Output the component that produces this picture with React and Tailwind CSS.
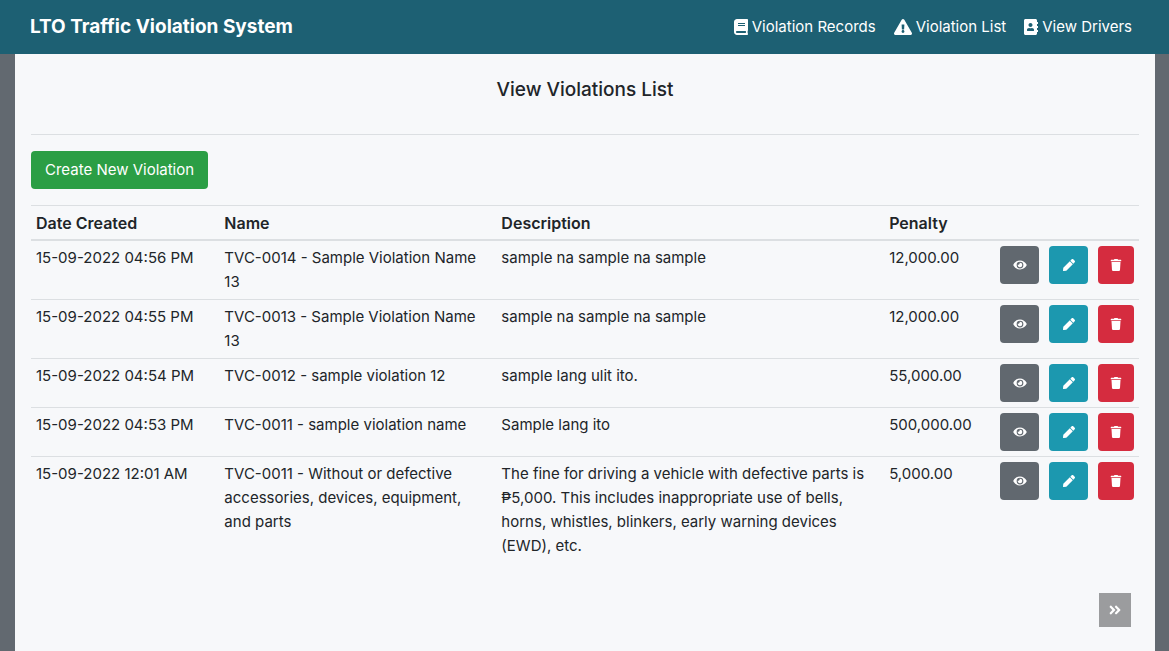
import { FaBook, FaExclamationTriangle, FaAddressBook, FaEye, FaPen, FaTrash, FaAngleDoubleRight } from "react-icons/fa";

const links = [
  { label: "Violation Records", Icon: FaBook, size: "h-4 w-3.5" },
  { label: "Violation List", Icon: FaExclamationTriangle, size: "h-4 w-[18px]" },
  { label: "View Drivers", Icon: FaAddressBook, size: "h-4 w-3.5" },
];

const rows = [
  { date: "15-09-2022 04:56 PM", name: "TVC-0014 - Sample Violation Name 13", description: "sample na sample na sample", penalty: "12,000.00" },
  { date: "15-09-2022 04:55 PM", name: "TVC-0013 - Sample Violation Name 13", description: "sample na sample na sample", penalty: "12,000.00" },
  { date: "15-09-2022 04:54 PM", name: "TVC-0012 - sample violation 12", description: "sample lang ulit ito.", penalty: "55,000.00" },
  { date: "15-09-2022 04:53 PM", name: "TVC-0011 - sample violation name", description: "Sample lang ito", penalty: "500,000.00" },
  {
    date: "15-09-2022 12:01 AM",
    name: "TVC-0011 - Without or defective accessories, devices, equipment, and parts",
    description:
      "The fine for driving a vehicle with defective parts is ₱5,000. This includes inappropriate use of bells, horns, whistles, blinkers, early warning devices (EWD), etc.",
    penalty: "5,000.00",
  },
];

const actions = [
  { label: "View", Icon: FaEye, size: "h-3 w-3.5", color: "bg-[#61686f]" },
  { label: "Edit", Icon: FaPen, size: "h-3 w-3", color: "bg-[#1c98af]" },
  { label: "Delete", Icon: FaTrash, size: "h-3 w-3", color: "bg-[#d52c3f]" },
];

export default function App() {
  return (
    <div className="flex min-h-screen flex-col bg-[#626970] font-['Inter','Liberation_Sans',sans-serif] text-[15px] leading-6 text-[#212529]">
      <header className="flex h-[54px] items-center justify-between bg-[#1d6073] pr-[37px] pl-[30px] text-white">
        <a href="#home" className="text-[19px] font-bold">LTO Traffic Violation System</a>
        <nav className="flex gap-[18px]">
          {links.map(({ label, Icon, size }) => (
            <a key={label} href="#nav" className="flex items-center gap-1">
              <Icon className={size} aria-hidden="true" />
              {label}
            </a>
          ))}
        </nav>
      </header>
      <main className="mr-[14px] ml-[15px] flex-1 bg-[#f7f8fa] px-4 py-6">
        <h1 className="text-center text-[19px] font-medium">View Violations List</h1>
        <hr className="mt-8 mb-4 border-[#dcdfe2]" />
        <button type="button" className="h-[38px] rounded bg-[#2b9e45] px-3.5 text-white">Create New Violation</button>
        <table className="mt-4 w-full table-fixed border-collapse text-left">
          <colgroup>
            <col className="w-[17%]" />
            <col className="w-[25%]" />
            <col className="w-[35%]" />
            <col className="w-[10%]" />
            <col className="w-[49px]" />
            <col className="w-12" />
            <col className="w-[46px]" />
          </colgroup>
          <thead>
            <tr className="border-t border-b-2 border-[#dcdfe2] text-base leading-6">
              {["Date Created", "Name", "Description", "Penalty"].map((h) => (
                <th key={h} scope="col" className="px-[5px] pt-[5px] pb-1 font-semibold">{h}</th>
              ))}
              <td colSpan={3} />
            </tr>
          </thead>
          <tbody>
            {rows.map((row, i) => (
              <tr key={row.date} className={i > 0 ? "border-t border-[#dcdfe2] align-top" : "align-top"}>
                <td className="p-[5px]">{row.date}</td>
                <td className="p-[5px]">{row.name}</td>
                <td className="p-[5px]">{row.description}</td>
                <td className="p-[5px]">{row.penalty}</td>
                {actions.map(({ label, Icon, size, color }) => (
                  <td key={label} className="p-[5px]">
                    <button type="button" aria-label={label} className={`flex h-[38px] w-full items-center justify-center rounded text-white ${color}`}>
                      <Icon className={size} aria-hidden="true" />
                    </button>
                  </td>
                ))}
              </tr>
            ))}
          </tbody>
        </table>
        <div className="mt-[30px] flex justify-end pr-2">
          <button type="button" aria-label="Next page" className="flex h-[34px] w-8 items-center justify-center bg-[#9b9c9e] text-white">
            <FaAngleDoubleRight size={14} aria-hidden="true" />
          </button>
        </div>
      </main>
    </div>
  );
}
